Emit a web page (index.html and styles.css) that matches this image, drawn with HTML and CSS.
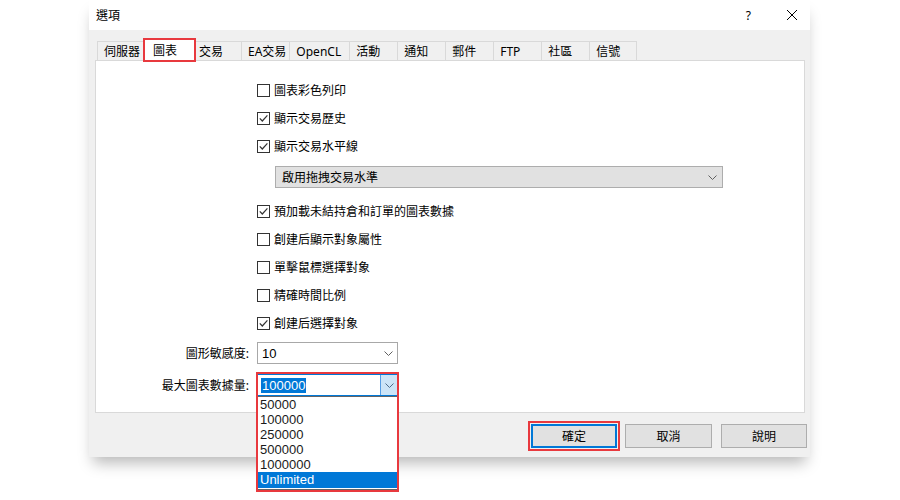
FILE: index.html
```html
<!DOCTYPE html>
<html lang="zh-Hant">
<head>
<meta charset="utf-8">
<title>選項</title>
<link rel="stylesheet" href="styles.css">
</head>
<body>
<div class="dialog">
  <div class="titlebar">
    <span class="title">選項</span>
    <span class="help">?</span>
    <svg class="close" viewBox="0 0 10 10" width="10" height="10"><path d="M0 0L10 10M10 0L0 10" stroke="#000" stroke-width="1" fill="none"/></svg>
  </div>
  <div class="body">
    <div class="tabs">
      <div class="tab first">伺服器</div>
      <div class="tab active">圖表<span class="mark"></span></div>
      <div class="tab">交易</div>
      <div class="tab">EA交易</div>
      <div class="tab ocl">OpenCL</div>
      <div class="tab">活動</div>
      <div class="tab">通知</div>
      <div class="tab">郵件</div>
      <div class="tab">FTP</div>
      <div class="tab">社區</div>
      <div class="tab last">信號</div>
    </div>
    <div class="panel">
      <div class="checks">
        <div class="check"><span class="box"></span><span>圖表彩色列印</span></div>
        <div class="check"><span class="box"><svg viewBox="0 0 11 11" width="11" height="11"><path d="M1.8 5.4L4.3 8L9.4 2.4" stroke="#333" stroke-width="1.2" fill="none"/></svg></span><span>顯示交易歷史</span></div>
        <div class="check"><span class="box"><svg viewBox="0 0 11 11" width="11" height="11"><path d="M1.8 5.4L4.3 8L9.4 2.4" stroke="#333" stroke-width="1.2" fill="none"/></svg></span><span>顯示交易水平線</span></div>
        <div class="select">
          <span>啟用拖拽交易水準</span>
          <svg class="chev" viewBox="0 0 9 5" width="9" height="5"><path d="M0.5 0.5L4.5 4.5L8.5 0.5" stroke="#606060" stroke-width="1" fill="none"/></svg>
        </div>
        <div class="check"><span class="box"><svg viewBox="0 0 11 11" width="11" height="11"><path d="M1.8 5.4L4.3 8L9.4 2.4" stroke="#333" stroke-width="1.2" fill="none"/></svg></span><span>預加載未結持倉和訂單的圖表數據</span></div>
        <div class="check"><span class="box"></span><span>創建后顯示對象屬性</span></div>
        <div class="check"><span class="box"></span><span>單擊鼠標選擇對象</span></div>
        <div class="check"><span class="box"></span><span>精確時間比例</span></div>
        <div class="check"><span class="box"><svg viewBox="0 0 11 11" width="11" height="11"><path d="M1.8 5.4L4.3 8L9.4 2.4" stroke="#333" stroke-width="1.2" fill="none"/></svg></span><span>創建后選擇對象</span></div>
      </div>
      <div class="field f1">
        <span class="flabel">圖形敏感度:</span>
        <div class="combo">
          <span class="val">10</span>
          <span class="btnarea"><svg class="chev" viewBox="0 0 9 5" width="9" height="5"><path d="M0.5 0.5L4.5 4.5L8.5 0.5" stroke="#606060" stroke-width="1" fill="none"/></svg></span>
        </div>
      </div>
      <div class="field f2">
        <span class="flabel">最大圖表數據量:</span>
        <div class="combo open">
          <span class="val"><span class="sel">100000</span></span>
          <span class="btnarea"><svg class="chev" viewBox="0 0 9 5" width="9" height="5"><path d="M0.5 0.5L4.5 4.5L8.5 0.5" stroke="#4d6b8a" stroke-width="1" fill="none"/></svg></span>
          <ul class="list">
            <li>50000</li>
            <li>100000</li>
            <li>250000</li>
            <li>500000</li>
            <li>1000000</li>
            <li class="hi">Unlimited</li>
          </ul>
          <span class="redmark"></span>
        </div>
      </div>
    </div>
    <div class="buttons">
      <div class="btn default">確定<span class="mark"></span></div>
      <div class="btn wide">取消</div>
      <div class="btn">說明</div>
    </div>
  </div>
</div>
</body>
</html>
```

FILE: styles.css
```css
* { box-sizing: border-box; }
html, body { margin: 0; padding: 0; background: #fff; }
html { height: 100%; }
body {
  min-height: 500px;
  font-family: "Noto Sans", "Noto Sans CJK TC", sans-serif;
  font-size: 12px;
  color: #000;
}
.dialog {
  width: 721px;
  margin-left: 89px;
  box-shadow: 0 10px 14px -4px rgba(0, 0, 0, 0.28);
}
.titlebar {
  height: 30px;
  display: flex;
  align-items: center;
  padding: 0 13px 0 7px;
  background: #fff;
}
.title { flex: 1; }
.help { margin-right: 36px; }
.close { display: block; }

.body {
  background: #f0f0f0;
  padding: 11px 5px 9px 6px;
}
.tabs {
  display: flex;
  align-items: flex-end;
  height: 19px;
  padding-left: 2px;
  position: relative;
  z-index: 2;
}
.tab {
  height: 19px;
  min-width: 48px;
  padding: 0 3px 0 6px;
  border-top: 1px solid #d9d9d9;
  border-left: 1px solid #d9d9d9;
  display: flex;
  align-items: center;
  background: #f0f0f0;
  white-space: nowrap;
}
.tab.first { min-width: 45px; }
.tab.ocl { padding-right: 8px; }
.tab.last { border-right: 1px solid #d9d9d9; }
.tab.active {
  position: relative;
  width: 53px;
  height: 23px;
  margin: 0 -3px -1px 0;
  padding-left: 9px;
  padding-bottom: 1px;
  background: #fff;
  border-right: 1px solid #d9d9d9;
  z-index: 3;
}
.tab.active .mark {
  position: absolute;
  left: -1px;
  top: -1px;
  right: -1px;
  bottom: -1px;
  border: 2px solid #e8393e;
}
.tab.active + .tab { border-left: 0; }

.panel {
  position: relative;
  z-index: 1;
  background: #fff;
  border: 1px solid #d9d9d9;
  padding: 15px 0 16px 0;
}
.checks {
  display: flex;
  flex-direction: column;
  margin-left: 161px;
}
.check {
  height: 28px;
  display: flex;
  align-items: center;
  gap: 4px;
}
.box {
  width: 13px;
  height: 13px;
  border: 1px solid #333;
  background: #fff;
  display: block;
  flex: none;
}
.box svg { display: block; }
.select {
  margin: 6px 0 9px 18px;
  width: 448px;
  height: 22px;
  background: #e1e1e1;
  border: 1px solid #adadad;
  display: flex;
  align-items: center;
  justify-content: space-between;
  padding: 0 5px 0 6px;
}
.chev { display: block; }

.field {
  display: flex;
  align-items: center;
  gap: 8px;
}
.field.f1 { margin-top: 5px; }
.field.f2 { margin-top: 10px; }
.flabel {
  width: 153px;
  text-align: right;
}
.combo {
  position: relative;
  width: 141px;
  height: 22px;
  border: 1px solid #a8a8a8;
  background: #fff;
  display: flex;
  align-items: stretch;
}
.combo .val {
  flex: 1;
  display: flex;
  align-items: center;
  padding-left: 4px;
  font-family: "Liberation Sans", "Noto Sans", sans-serif;
  font-size: 13px;
}
.combo .btnarea {
  width: 17px;
  display: flex;
  align-items: center;
  justify-content: center;
}
.combo.open { border-color: #0078d7; }
.combo.open .val { padding-left: 3px; }
.combo.open .btnarea {
  background: #cce4f7;
  border-left: 1px solid #569de5;
}
.sel {
  background: #0078d7;
  color: #fff;
  line-height: 15px;
  padding: 0 1px;
}
.list {
  position: absolute;
  left: -1px;
  right: -1px;
  top: 100%;
  margin: 1px 0 0 0;
  padding: 0 0 1px 0;
  list-style: none;
  background: #fff;
  border: 1px solid #646464;
  z-index: 5;
  font-family: "Liberation Sans", "Noto Sans", sans-serif;
  font-size: 13px;
  line-height: 15px;
}
.list li {
  height: 15px;
  padding-left: 2px;
  color: #1a1a1a;
  overflow: hidden;
}
.list li.hi {
  background: #0078d7;
  color: #fff;
  height: 16px;
}
.redmark {
  position: absolute;
  left: -2px;
  top: -3px;
  width: 143px;
  height: 120px;
  border: 2px solid #e8393e;
  z-index: 6;
}

.buttons {
  display: flex;
  justify-content: flex-end;
  gap: 8px;
  margin: 11px -2px 0 0;
}
.btn {
  width: 86px;
  height: 24px;
  border: 1px solid #adadad;
  background: #e1e1e1;
  display: flex;
  align-items: center;
  justify-content: center;
}
.btn.wide { width: 87px; margin-right: 1px; }
.btn.default {
  position: relative;
  border: 2px solid #0078d7;
}
.btn.default .mark {
  position: absolute;
  left: -5px;
  top: -5px;
  right: -5px;
  bottom: -5px;
  border: 2px solid #e8393e;
}
```
